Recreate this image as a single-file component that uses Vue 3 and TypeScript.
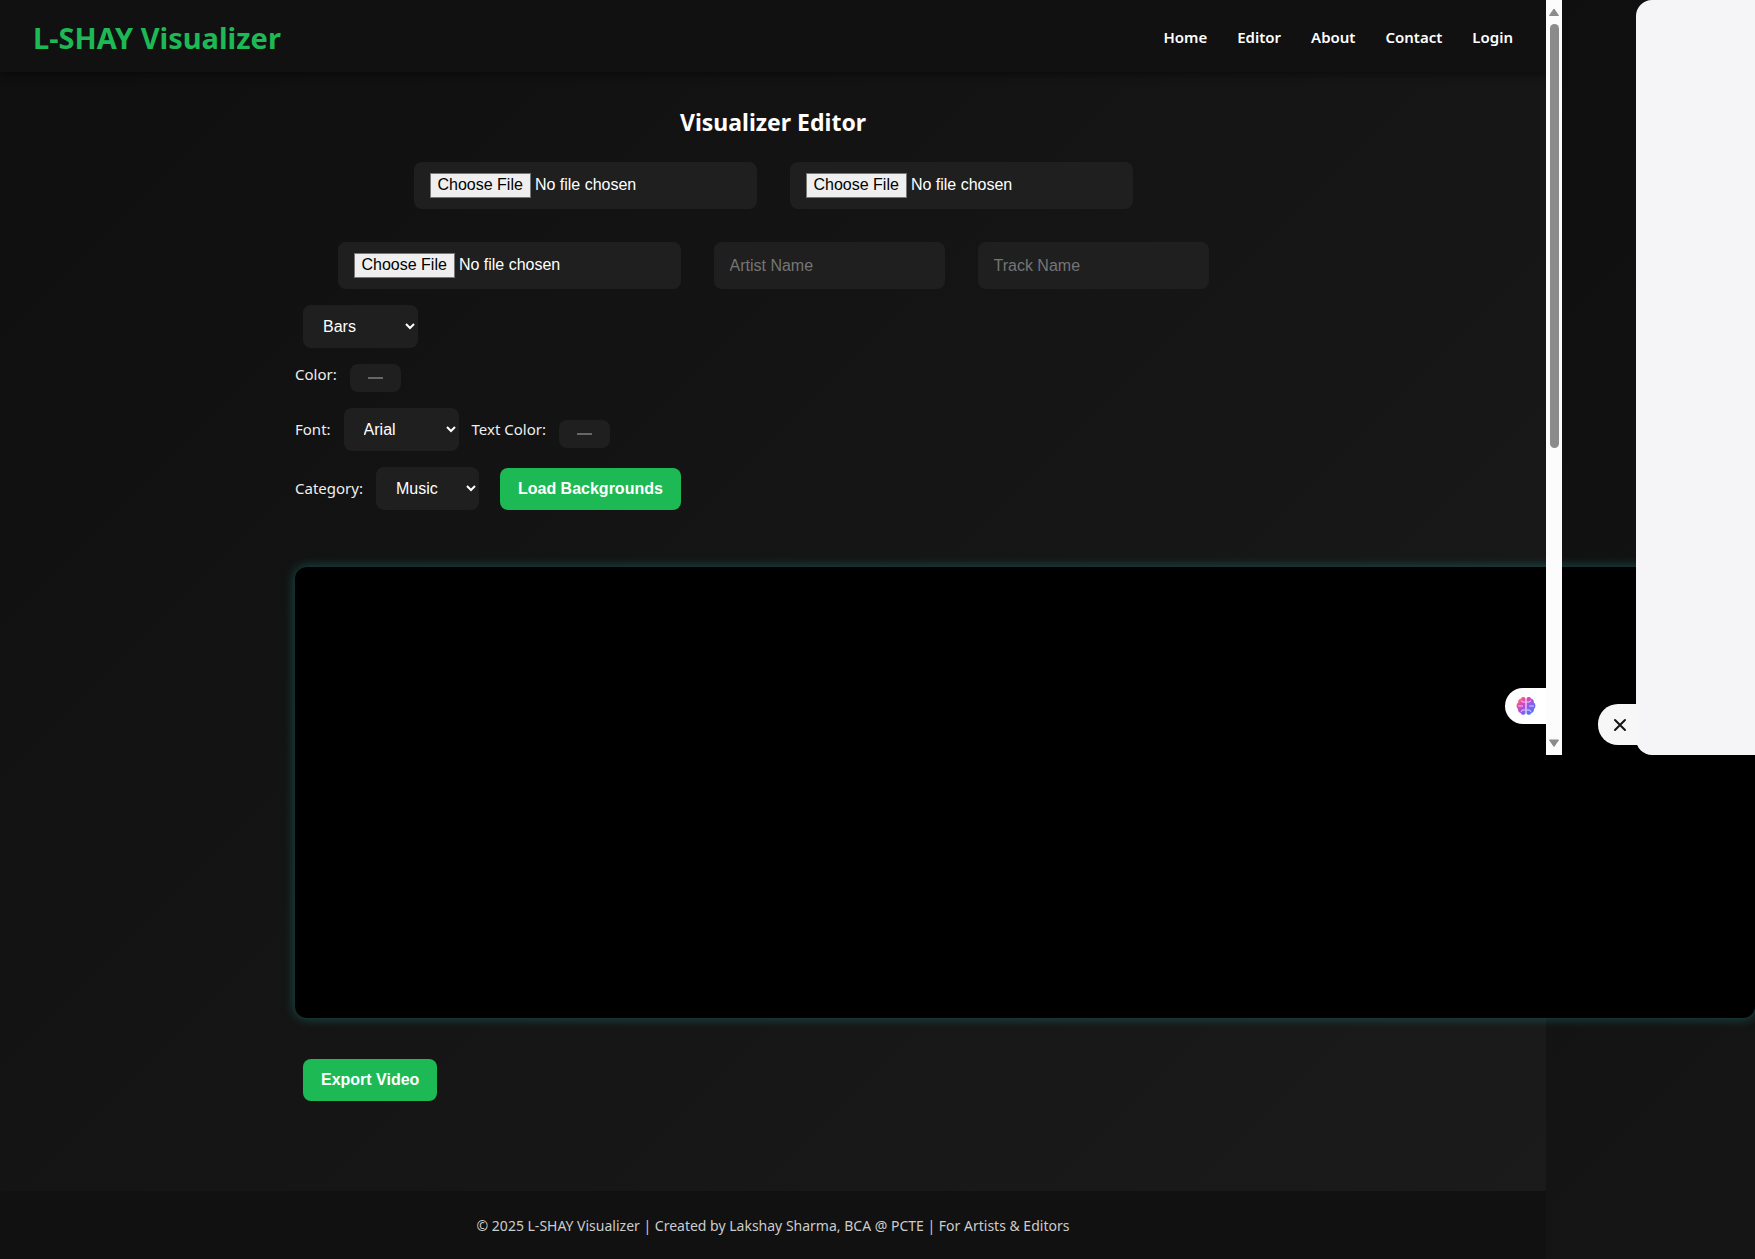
<script setup lang="ts">
import { ref } from 'vue'

const links = ['Home', 'Editor', 'About', 'Contact', 'Login']
const artist = ref('')
const track = ref('')
const style = ref('Bars')
const font = ref('Arial')
const category = ref('Music')
const color = ref('#1f1f1f')
const textColor = ref('#1f1f1f')
</script>

<template>
  <div class="shell">
    <header class="topbar">
      <div class="brand">L-SHAY Visualizer</div>
      <nav class="nav">
        <a v-for="link in links" :key="link" :href="'#' + link.toLowerCase()">{{ link }}</a>
      </nav>
    </header>

    <main class="editor">
      <section class="controls">
        <h1>Visualizer Editor</h1>
        <div class="uploads">
          <div class="upload-row">
            <input class="field file" type="file" aria-label="Audio file" />
            <input class="field file" type="file" aria-label="Background file" />
          </div>
          <div class="upload-row">
            <input class="field file" type="file" aria-label="Logo file" />
            <input v-model="artist" class="field text" type="text" placeholder="Artist Name" aria-label="Artist Name" />
            <input v-model="track" class="field text" type="text" placeholder="Track Name" aria-label="Track Name" />
          </div>
        </div>
        <div class="options">
          <div class="option indent">
            <select v-model="style" class="field wide" aria-label="Visualizer style">
              <option>Bars</option>
              <option>Circle</option>
              <option>Wave</option>
            </select>
          </div>
          <div class="option color-row">
            <label for="color">Color:</label>
            <input id="color" v-model="color" class="field swatch" type="color" />
          </div>
          <div class="option font-row">
            <label for="font">Font:</label>
            <select id="font" v-model="font" class="field wide">
              <option>Arial</option>
              <option>Verdana</option>
              <option>Georgia</option>
            </select>
            <label for="text-color">Text Color:</label>
            <input id="text-color" v-model="textColor" class="field swatch" type="color" />
          </div>
          <div class="option">
            <label for="category">Category:</label>
            <select id="category" v-model="category" class="field narrow">
              <option>Music</option>
              <option>Nature</option>
              <option>City</option>
            </select>
            <button class="action load" type="button">Load Backgrounds</button>
          </div>
        </div>
      </section>

      <canvas class="stage"></canvas>

      <div class="export">
        <button class="action" type="button">Export Video</button>
      </div>
    </main>

    <footer class="footer">© 2025 L-SHAY Visualizer | Created by Lakshay Sharma, BCA @ PCTE | For Artists &amp; Editors</footer>

    <aside class="overlay">
      <div class="scrollbar">
        <svg width="16" height="24" viewBox="0 0 16 24"><path d="M8 9L12.500 15.500H3.500Z" fill="#8b8b8b" stroke="#8b8b8b" stroke-linejoin="round" /></svg>
        <div class="track"><div class="thumb"></div></div>
        <svg width="16" height="24" viewBox="0 0 16 24"><path d="M8 15.500L12.500 9H3.500Z" fill="#8b8b8b" stroke="#8b8b8b" stroke-linejoin="round" /></svg>
      </div>
      <div class="panel"></div>
      <button class="pill brain" type="button" aria-label="Open assistant">
        <svg width="20" height="20" viewBox="0 0 20 20">
          <defs>
            <linearGradient id="brain-fill" x1="0" y1="0" x2="1" y2="1">
              <stop offset="0" stop-color="#ff9a3c" />
              <stop offset="0.300" stop-color="#e445b4" />
              <stop offset="0.600" stop-color="#8a5cf0" />
              <stop offset="1" stop-color="#2f8dff" />
            </linearGradient>
          </defs>
          <path fill="url(#brain-fill)" d="M9.500 2.500C8.500 .6 5.500 .6 4.800 2.800C2.800 3 1.700 4.800 2.300 6.500C.7 7.500 .2 9.300 .8 11C1 12 1.700 12.700 2 13C1.800 15 2.800 16.500 4.600 16.900C5.500 19.300 8.600 19.500 9.500 17.500ZM10.500 2.500C11.500 .6 14.500 .6 15.200 2.800C17.200 3 18.300 4.800 17.700 6.500C19.300 7.500 19.800 9.300 19.200 11C19 12 18.300 12.700 18 13C18.200 15 17.200 16.500 15.400 16.900C14.500 19.300 11.400 19.500 10.500 17.500Z" />
          <path fill="none" stroke="#fff" stroke-opacity="0.700" stroke-linecap="round" d="M9 6H7Q5.500 6 5.300 4.800M2.500 10H6.500M9 14H7Q5.500 14 5.300 15.500M11 6H13Q14.500 6 14.700 4.800M17.500 10H13.500M11 14H13Q14.500 14 14.700 15.500" />
        </svg>
      </button>
      <button class="pill close" type="button" aria-label="Close panel">
        <svg width="14" height="14" viewBox="0 0 14 14"><path d="M2 2L12 12M12 2L2 12" stroke="#151515" stroke-width="2" stroke-linecap="round" /></svg>
      </button>
    </aside>
  </div>
</template>

<style>
body {
  margin: 0;
  background: #111;
}
</style>

<style scoped>
.shell {
  --side: 209px;
  position: relative;
  display: flex;
  flex-direction: column;
  min-height: 100vh;
  overflow: hidden;
  background: linear-gradient(135deg, #0f0f0f, #1b1b1b) 0 0 / calc(100% - var(--side)) 100% repeat-x;
  color: #fff;
  font-family: 'Segoe UI', 'Noto Sans', sans-serif;
  font-size: 15px;
}

.topbar {
  display: flex;
  align-items: center;
  justify-content: space-between;
  box-sizing: border-box;
  height: 72px;
  margin-right: var(--side);
  padding: 2px 33px 0;
  background: #111;
  box-shadow: 0 2px 8px rgba(0, 0, 0, 0.5);
}

.brand {
  color: #1db954;
  font-size: 29px;
  font-weight: 700;
}

.nav {
  display: flex;
  gap: 30px;
}

.nav a {
  color: #fff;
  font-weight: 600;
  text-decoration: none;
}

.editor {
  flex: 1;
  display: grid;
  grid-template-columns: 1fr minmax(0, 956px) 1fr var(--side);
  align-content: start;
  padding-top: 34px;
}

.controls {
  grid-column: 2;
}

h1 {
  margin: 0 0 24px;
  font-size: 23px;
  line-height: 32px;
  text-align: center;
}

.uploads {
  display: flex;
  flex-direction: column;
  gap: 33px;
}

.upload-row {
  display: flex;
  justify-content: center;
  gap: 33px;
}

.field,
.action {
  box-sizing: border-box;
  margin: 0;
  border: none;
  border-radius: 8px;
  background: #1f1f1f;
  color: #fff;
  font-family: 'Liberation Sans', Arial, sans-serif;
  font-size: 16px;
}

.file {
  width: 343px;
  height: 47px;
  padding: 11px 16px;
}

.file::file-selector-button {
  height: 25px;
  padding: 0 7px 1px;
  border: 1px solid #767676;
  border-radius: 0;
  background: #efefef;
  color: #000;
  font: inherit;
}

.text {
  width: 231px;
  height: 47px;
  padding: 0 16px;
}

.text::placeholder {
  color: #757575;
}

.options {
  display: flex;
  flex-direction: column;
  gap: 16px;
  margin-top: 16px;
}

.option {
  display: flex;
  align-items: center;
  gap: 13px;
}

.option label {
  padding-bottom: 2px;
  color: #eee;
  line-height: 20px;
}

.color-row label {
  padding-bottom: 8px;
}

.indent {
  padding-left: 8px;
}

select.field {
  height: 43px;
  padding: 0 16px;
}

.wide {
  width: 115px;
}

.narrow {
  width: 103px;
}

.swatch {
  width: 51px;
  height: 28px;
  padding: 13px 18px;
}

.font-row .swatch {
  margin-top: 8px;
}

.swatch::-webkit-color-swatch-wrapper {
  padding: 0;
}

.swatch::-webkit-color-swatch {
  border: 1px solid #666;
  border-radius: 0;
}

.action {
  height: 42px;
  padding: 0 18px;
  background: #1db954;
  font-weight: 700;
}

.load {
  margin-left: 8px;
}

.stage {
  grid-column: 2 / 5;
  width: 100%;
  height: 451px;
  margin: 57px 0 41px;
  border-radius: 12px;
  background: #000;
  box-shadow: 0 0 12px rgba(29, 185, 172, 0.4);
}

.export {
  grid-column: 2;
  padding-left: 8px;
}

.footer {
  box-sizing: border-box;
  margin-right: var(--side);
  padding: 24px 16px 23px;
  background: #111;
  color: #ccc;
  font-size: 14px;
  line-height: 21px;
  text-align: center;
}

.overlay {
  position: absolute;
  top: 0;
  right: 0;
  display: flex;
  justify-content: space-between;
  width: var(--side);
  height: 60vh;
}

.scrollbar {
  display: flex;
  flex-direction: column;
  width: 16px;
  background: #fcfcfc;
}

.track {
  flex: 1;
}

.thumb {
  width: 9px;
  height: 60%;
  margin: 0 auto;
  border-radius: 5px;
  background: #8b8b8b;
}

.panel {
  width: 119px;
  border-radius: 16px 0 0 16px;
  background: #f5f5f8;
}

.pill {
  position: absolute;
  display: flex;
  align-items: center;
  border: none;
}

.pill svg {
  flex-shrink: 0;
}

.brain {
  right: 100%;
  bottom: 31px;
  width: 41px;
  height: 36px;
  padding: 0 0 0 11px;
  border-radius: 18px 0 0 18px;
  background: #fff;
}

.close {
  right: 117px;
  bottom: 10px;
  width: 40px;
  height: 41px;
  padding: 0 0 0 15px;
  border-radius: 20px 0 0 20px;
  background: #f7f7f7;
}
</style>
